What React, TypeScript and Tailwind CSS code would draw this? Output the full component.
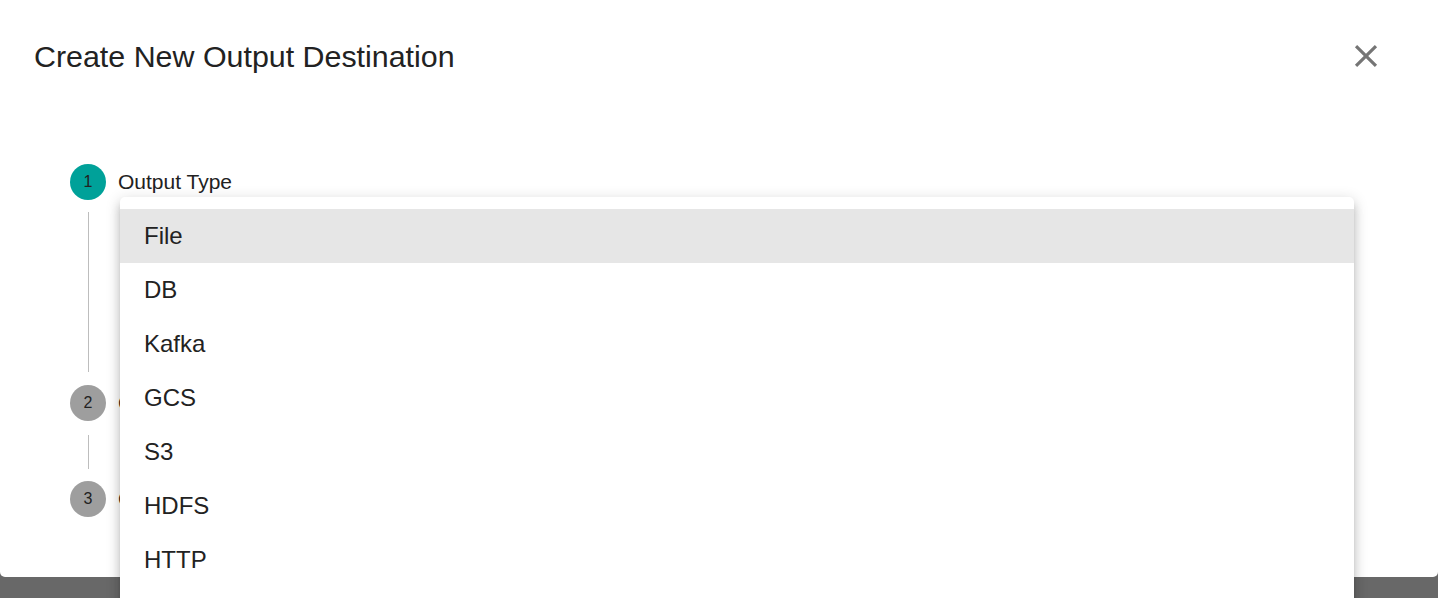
import { FC } from "react";

const options = ["File", "DB", "Kafka", "GCS", "S3", "HDFS", "HTTP"];

const StepCircle: FC<{ n: number; active?: boolean }> = ({ n, active }) => (
    <div
        className={
            "w-9 h-9 rounded-full flex items-center justify-center text-[16px] text-[#222] shrink-0 " +
            (active ? "bg-[#00a199]" : "bg-[#9e9e9e]")
        }
    >
        {n}
    </div>
);

const App: FC = () => {
    return (
        <div
            className="relative h-[598px] w-full overflow-hidden bg-[#686868] text-[#222]"
            style={{ fontFamily: '"Liberation Sans", Arial, sans-serif' }}
        >
            <div className="h-[577px] bg-white rounded-b-[5px]">
                {/* header */}
                <div className="flex items-center justify-between pl-[34px] pr-[53px] pt-[37px]">
                    <h2 className="text-[30.4px] leading-[38px]">Create New Output Destination</h2>
                    <svg width="38" height="38" viewBox="0 0 24 24" fill="#757575">
                        <path d="M19 6.41L17.59 5 12 10.59 6.41 5 5 6.41 10.59 12 5 17.59 6.41 19 12 13.41 17.59 19 19 17.59 13.41 12z" />
                    </svg>
                </div>

                {/* stepper */}
                <div className="pl-[70px] pt-[89px] flex flex-col">
                    <div className="flex items-center gap-3">
                        <StepCircle n={1} active />
                        <span className="text-[21px]">Output Type</span>
                    </div>
                    <div className="w-[36px] flex justify-center pt-3 pb-[13px]">
                        <div className="w-px h-[160px] bg-[#bdbdbd]" />
                    </div>
                    <div className="flex items-center gap-3">
                        <StepCircle n={2} />
                        <span className="text-[21px]">Configuration</span>
                    </div>
                    <div className="w-[36px] flex justify-center pt-[14px] pb-3">
                        <div className="w-px h-[34px] bg-[#bdbdbd]" />
                    </div>
                    <div className="flex items-center gap-3">
                        <StepCircle n={3} />
                        <span className="text-[21px]">Confirm</span>
                    </div>
                </div>
            </div>

            {/* open select menu */}
            <ul className="absolute left-[120px] top-[197px] w-[1234px] bg-white rounded-[5px] pt-3 pb-6 shadow-[0_5px_5px_-3px_rgba(0,0,0,0.2),0_8px_10px_1px_rgba(0,0,0,0.14),0_3px_14px_2px_rgba(0,0,0,0.12)]">
                {options.map((o, i) => (
                    <li
                        key={o}
                        className={
                            "h-[54px] flex items-center pl-6 text-[24px] " +
                            (i === 0 ? "bg-[#e6e6e6]" : "")
                        }
                    >
                        {o}
                    </li>
                ))}
            </ul>
        </div>
    );
};

export default App;
